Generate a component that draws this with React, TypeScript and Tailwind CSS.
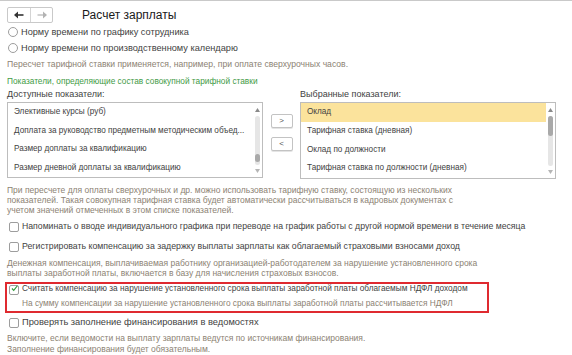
import React from "react";

const available = [
  "Элективные курсы (руб)",
  "Доплата за руководство предметным методическим объед...",
  "Размер доплаты за квалификацию",
  "Размер дневной доплаты за квалификацию",
];

const selected = [
  "Оклад",
  "Тарифная ставка (дневная)",
  "Оклад по должности",
  "Тарифная ставка по должности (дневная)",
];

function Radio({ label }: { label: string }) {
  return (
    <div className="flex items-center gap-[3px] pl-[8px]">
      <span className="w-[10px] h-[10px] rounded-full border border-[#9d9d9d] bg-white shrink-0" />
      <span>{label}</span>
    </div>
  );
}

function Checkbox({ label, checked }: { label: string; checked?: boolean }) {
  return (
    <div className="flex items-center gap-[3px] pl-[9px]">
      <span className="w-[10px] h-[10px] rounded-[2px] border border-[#9d9d9d] bg-white shrink-0 flex items-center justify-center">
        {checked && (
          <svg width="11" height="11" viewBox="0 0 11 11" className="-mt-[2px] ml-[1px]">
            <path d="M1.5 5.5 L4.3 8.6 L10 1.2" fill="none" stroke="#2f9a3a" strokeWidth="1.8" />
          </svg>
        )}
      </span>
      <span className="whitespace-nowrap">{label}</span>
    </div>
  );
}

function Scrollbar({ thumbTop, thumbH }: { thumbTop: number; thumbH: number }) {
  return (
    <div className="w-[9px] flex flex-col items-center pt-[5px] pb-[4px] shrink-0">
      <svg width="5" height="4" viewBox="0 0 5 4">
        <path d="M0 4 L2.5 0 L5 4 Z" fill="#8a8a8a" />
      </svg>
      <div className="flex-1 w-[5px] my-[4px] rounded-full bg-[#e6e6e6] flex flex-col">
        <div style={{ height: thumbTop }} />
        <div className="w-[5px] rounded-full bg-[#a9a9a9]" style={{ height: thumbH }} />
      </div>
      <svg width="5" height="4" viewBox="0 0 5 4">
        <path d="M0 0 L2.5 4 L5 0 Z" fill="#b5b5b5" />
      </svg>
    </div>
  );
}

function ListBox({
  items,
  width,
  height,
  highlight,
  thumbTop,
  thumbH,
}: {
  items: string[];
  width: string;
  height: string;
  highlight?: boolean;
  thumbTop: number;
  thumbH: number;
}) {
  return (
    <div className={`${width} ${height} border border-[#bdbdbd] flex bg-white shrink-0`}>
      <div className="flex-1 flex flex-col min-w-0">
        {items.map((it, i) => (
          <div
            key={it}
            className={`h-[19px] flex items-center pl-[6px] whitespace-nowrap overflow-hidden text-[8.2px] ${
              highlight && i === 0 ? "bg-[#fbe39c]" : ""
            }`}
          >
            {it}
          </div>
        ))}
      </div>
      <Scrollbar thumbTop={thumbTop} thumbH={thumbH} />
    </div>
  );
}

function MoveButton({ children }: { children: React.ReactNode }) {
  return (
    <div className="w-[22px] h-[14px] border border-[#c3c3c3] rounded-[2px] bg-white flex items-center justify-center text-[8px] text-[#555] shadow-[0_1px_0_#e4e4e4]">
      {children}
    </div>
  );
}

export default function App() {
  return (
    <div className="w-[572px] h-[355px] overflow-hidden bg-white border-t border-[#c9c9c9] font-['Liberation_Sans',Arial,sans-serif] text-[9px] text-[#424242]">
      <div className="flex items-center h-[20px] mt-[4px] pl-[7px]">
        <div className="w-[46px] h-[16px] border border-[#c9c9c9] rounded-[2px] flex">
          <div className="w-[23px] border-r border-[#d4d4d4] flex items-center justify-center">
            <svg width="10" height="8" viewBox="0 0 10 8">
              <path d="M0 4 L4 0.5 L4 7.5 Z" fill="#333" />
              <path d="M3 4 H9.5" stroke="#333" strokeWidth="1.6" />
            </svg>
          </div>
          <div className="flex-1 flex items-center justify-center">
            <svg width="10" height="8" viewBox="0 0 10 8">
              <path d="M10 4 L6 0.5 L6 7.5 Z" fill="#b3b3b3" />
              <path d="M0.5 4 H7" stroke="#b3b3b3" strokeWidth="1.2" />
            </svg>
          </div>
        </div>
        <div className="ml-[29px] text-[12px] text-[#1a1a1a]">Расчет зарплаты</div>
      </div>

      <div className="h-[15px] flex items-center text-[9.2px]">
        <Radio label="Норму времени по графику сотрудника" />
      </div>
      <div className="h-[17px] flex items-center text-[9.2px]">
        <Radio label="Норму времени по производственному календарю" />
      </div>
      <div className="h-[14px] flex items-center pl-[7px] text-[8.6px] text-[#8c8273]">
        Пересчет тарифной ставки применяется, например, при оплате сверхурочных часов.
      </div>
      <div className="h-[14px] mt-[3px] flex items-center pl-[7px] text-[8.3px] text-[#3f9b46]">
        Показатели, определяющие состав совокупной тарифной ставки
      </div>

      <div className="h-[14px] flex items-center">
        <div className="w-[300px] pl-[7px]">Доступные показатели:</div>
        <div>Выбранные показатели:</div>
      </div>

      <div className="flex items-start pl-[7px] h-[77px]">
        <ListBox items={available} width="w-[256px]" height="h-[76px]" thumbTop={38} thumbH={8} />
        <div className="w-[37px] flex flex-col items-center gap-[9px] pt-[12px]">
          <MoveButton>&gt;</MoveButton>
          <MoveButton>&lt;</MoveButton>
        </div>
        <ListBox items={selected} width="w-[256px]" height="h-[77px]" highlight thumbTop={0} thumbH={20} />
      </div>

      <div className="mt-[6px] pl-[7px] text-[8.5px] leading-[10px] text-[#8c8273]">
        <div>При пересчете для оплаты сверхурочных и др. можно использовать тарифную ставку, состоящую из нескольких</div>
        <div>показателей. Такая совокупная тарифная ставка будет автоматически рассчитываться в кадровых документах с</div>
        <div>учетом значений отмеченных в этом списке показателей.</div>
      </div>

      <div className="h-[14px] mt-[5px] flex items-center text-[8.7px]">
        <Checkbox label="Напоминать о вводе индивидуального графика при переводе на график работы с другой нормой времени в течение месяца" />
      </div>
      <div className="h-[14px] mt-[6px] flex items-center text-[8.75px]">
        <Checkbox label="Регистрировать компенсацию за задержку выплаты зарплаты как облагаемый страховыми взносами доход" />
      </div>
      <div className="mt-[4px] pl-[7px] text-[8.5px] leading-[10px] text-[#8c8273]">
        <div>Денежная компенсация, выплачиваемая работнику организацией-работодателем за нарушение установленного срока</div>
        <div>выплаты заработной платы, включается в базу для начисления страховых взносов.</div>
      </div>

      <div className="mt-[4px] ml-[5px] w-[484px] h-[31px] border-2 border-[#df2a30] flex flex-col text-[8.25px]">
        <div className="h-[11px] flex items-center -ml-[7px]">
          <Checkbox checked label="Считать компенсацию за нарушение установленного срока выплаты заработной платы облагаемым НДФЛ доходом" />
        </div>
        <div className="h-[10px] mt-[3px] flex items-center pl-[15px] text-[8.3px] text-[#8c8273]">
          На сумму компенсации за нарушение установленного срока выплаты заработной платы рассчитывается НДФЛ
        </div>
      </div>

      <div className="h-[14px] mt-[3px] flex items-center text-[9.3px]">
        <Checkbox label="Проверять заполнение финансирования в ведомостях" />
      </div>
      <div className="mt-[3px] pl-[7px] text-[8.5px] leading-[11px] text-[#8c8273]">
        <div>Включите, если ведомости на выплату зарплаты ведутся по источникам финансирования.</div>
        <div>Заполнение финансирования будет обязательным.</div>
      </div>
    </div>
  );
}
